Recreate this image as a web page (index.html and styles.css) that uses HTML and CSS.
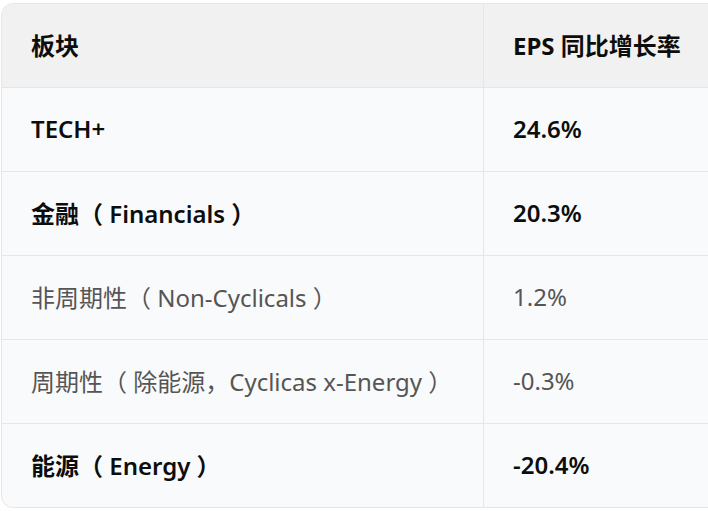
FILE: index.html
```html
<!DOCTYPE html>
<html lang="zh">
<head>
<meta charset="utf-8">
<link rel="stylesheet" href="styles.css">
</head>
<body>
<div class="wrap">
  <table class="tbl">
    <thead>
      <tr><th class="c1">板块</th><th class="c2">EPS 同比增长率</th></tr>
    </thead>
    <tbody>
      <tr><td class="strong">TECH+</td><td class="strong">24.6%</td></tr>
      <tr><td class="strong">金融（ Financials ）</td><td class="strong">20.3%</td></tr>
      <tr><td class="muted">非周期性（ Non-Cyclicals ）</td><td class="muted">1.2%</td></tr>
      <tr><td class="muted">周期性（ 除能源，Cyclicas x-Energy ）</td><td class="muted">-0.3%</td></tr>
      <tr><td class="strong">能源（ Energy ）</td><td class="strong">-20.4%</td></tr>
    </tbody>
  </table>
</div>
</body>
</html>
```
FILE: styles.css
```css
html, body {
  margin: 0;
  padding: 0;
  background: #ffffff;
  overflow: hidden;
}
.wrap {
  padding: 3px 0 0 1px;
  width: 740px;
}
.tbl {
  width: 740px;
  border-collapse: separate;
  border-spacing: 0;
  border: 1px solid #e6e6e6;
  border-radius: 12px;
  overflow: hidden;
  font-family: "Noto Sans", "Noto Sans CJK SC", sans-serif;
  font-size: 24px;
  color: #0d0d0d;
  background: #f9fafb;
}
.tbl th, .tbl td {
  padding: 0 0 2px 29px;
  text-align: left;
  vertical-align: middle;
  box-sizing: border-box;
  white-space: nowrap;
}
.tbl th {
  background: #f1f1f1;
  font-weight: 700;
  height: 83px;
}
.tbl td {
  border-top: 1px solid #e6e6e6;
  height: 84px;
}
.c1 { width: 481px; }
.tbl th + th, .tbl td + td {
  border-left: 1px solid #e6e6e6;
}
.strong { font-weight: 600; }
.muted { color: #555555; font-weight: 400; }
```
